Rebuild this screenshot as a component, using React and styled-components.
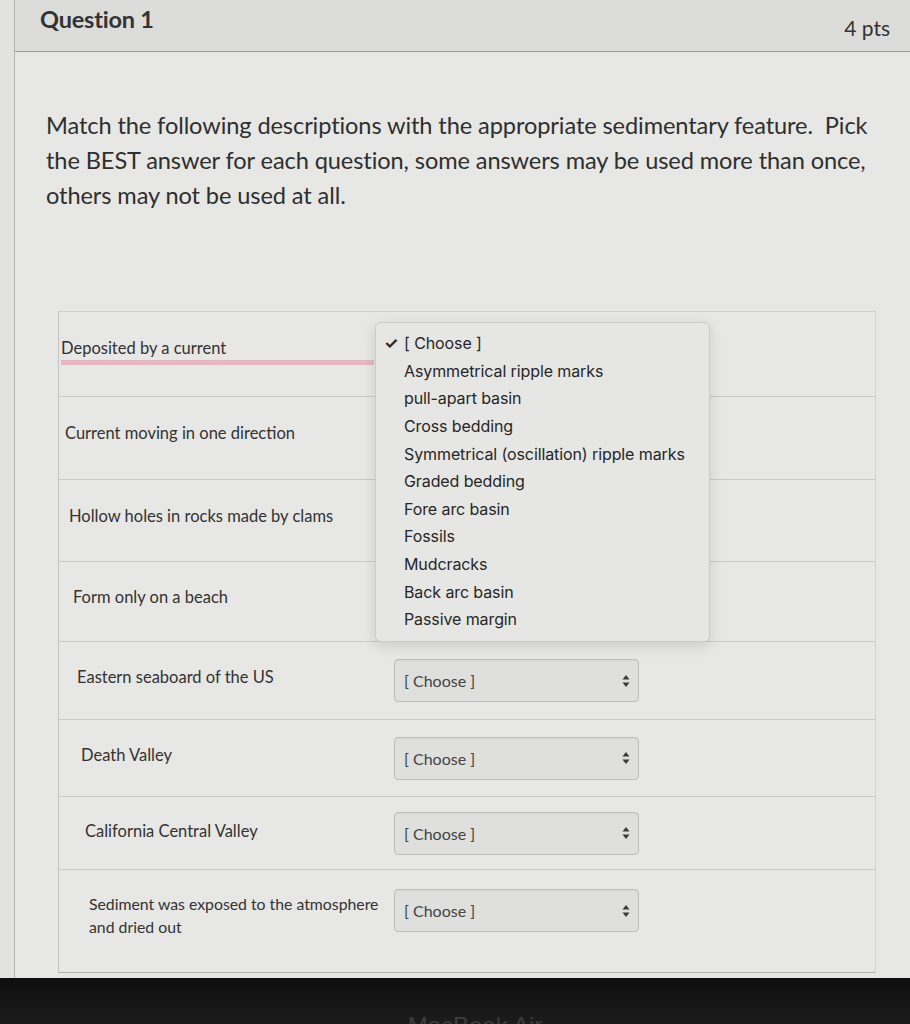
import React from "react";
import styled, { createGlobalStyle } from "styled-components";

const Global = createGlobalStyle`
  html, body { margin: 0; padding: 0; }
  body {
    background: #dcdcdb;
    font-family: Lato, "Open Sans", sans-serif;
    color: #2d2d2d;
    width: 910px;
    height: 1024px;
    overflow: hidden;
  }
`;

const Screen = styled.div`
  display: flex;
  flex-direction: column;
  height: 1024px;
`;

const Page = styled.div`
  display: flex;
  padding-left: 14px;
  background: #e2e2e1;
  height: 978px;
  box-sizing: border-box;
`;

const Card = styled.section`
  flex: 1;
  border-left: 1px solid #b4b4b4;
  background: #e7e7e5;
  display: flex;
  flex-direction: column;
`;

const Header = styled.header`
  height: 52px;
  box-sizing: border-box;
  background: #dcdcdb;
  border-bottom: 1px solid #9c9c9c;
  display: flex;
  justify-content: space-between;
  align-items: flex-start;
  padding: 5px 20px 0 25px;
`;

const Title = styled.h2`
  margin: 0;
  font-size: 23.5px;
  font-weight: 700;
  color: #333;
  letter-spacing: -0.2px;
`;

const Points = styled.span`
  font-size: 21px;
  color: #333;
  margin-top: 10px;
`;

const Body = styled.div`
  padding: 56px 34px 0 31px;
  display: flex;
  flex-direction: column;
`;

const Prompt = styled.p`
  margin: 0;
  max-width: 830px;
  font-size: 23.6px;
  line-height: 35px;
  color: #2f2f2f;
  letter-spacing: -0.1px;
`;

const Answers = styled.div`
  margin: 98px 0 0 12px;
  border-top: 1px solid #cfcfcd;
  border-bottom: 1px solid #b0b0ae;
  border-left: 1px solid #c4c4c2;
  border-right: 1px solid #d2d2d0;
  display: flex;
  flex-direction: column;
  padding-bottom: 32px;
`;

const Row = styled.div`
  display: flex;
  align-items: ${(p) => (p.$top ? "flex-start" : "center")};
  min-height: ${(p) => p.$h}px;
  box-sizing: border-box;
  border-bottom: ${(p) => (p.$last ? "none" : "1px solid #c9c9c7")};
  padding-top: ${(p) => (p.$top ? 19 : 0)}px;
`;

const Label = styled.div`
  width: 335px;
  padding-left: ${(p) => p.$indent + 2}px;
  padding-bottom: ${(p) => p.$pb}px;
  margin-top: ${(p) => p.$mt}px;
  box-sizing: border-box;
  flex-shrink: 0;
  font-size: ${(p) => p.$size}px;
  line-height: 23px;
  color: #333;
`;

const Underlined = styled.div`
  &::after {
    content: "";
    display: block;
    height: 5px;
    background: #e4b7c2;
    width: 313px;
  }
`;

const SelectWrap = styled.div`
  position: relative;
`;

const Select = styled.div`
  width: 245px;
  height: 43px;
  box-sizing: border-box;
  border: 1px solid #bdbdbb;
  border-radius: 4px;
  background: #dfdfdd;
  display: flex;
  align-items: center;
  justify-content: space-between;
  padding: 0 8px 0 9px;
  font-size: 16px;
  color: #444;
  box-shadow: inset 0 1px 2px rgba(0, 0, 0, 0.04);
  visibility: ${(p) => (p.$covered ? "hidden" : "visible")};
`;

const Arrows = () => (
  <svg width="8" height="14" viewBox="0 0 8 14">
    <path d="M4 1 L7.5 5.5 H0.5 Z" fill="#3a3a3a" />
    <path d="M4 13 L7.5 8.5 H0.5 Z" fill="#3a3a3a" />
  </svg>
);

const Menu = styled.ul`
  position: absolute;
  top: -11px;
  left: -19px;
  width: 333px;
  margin: 0;
  padding: 7px 0 8px;
  list-style: none;
  background: #e6e6e4;
  border: 1px solid #cbcbc9;
  border-radius: 6px;
  box-shadow: 0 4px 14px rgba(0, 0, 0, 0.12);
  z-index: 5;
  font-family: Inter, "Liberation Sans", sans-serif;
`;

const MenuItem = styled.li`
  display: flex;
  align-items: center;
  height: 27.6px;
  font-size: 16px;
  color: #262626;
  letter-spacing: -0.1px;
`;

const Check = styled.span`
  width: 28px;
  padding-left: 8px;
  box-sizing: border-box;
  font-size: 16px;
  font-weight: 700;
  color: #2a2a2a;
`;

const Bezel = styled.div`
  flex: 1;
  background: linear-gradient(#0e0e0e, #1c1c1c);
  display: flex;
  justify-content: center;
  align-items: flex-start;
  overflow: hidden;
`;

const Brand = styled.span`
  font-family: "Liberation Sans", sans-serif;
  font-size: 24px;
  color: #3c3c3c;
  margin-top: 34px;
  margin-left: 40px;
`;

const options = [
  "Asymmetrical ripple marks",
  "pull-apart basin",
  "Cross bedding",
  "Symmetrical (oscillation) ripple marks",
  "Graded bedding",
  "Fore arc basin",
  "Fossils",
  "Mudcracks",
  "Back arc basin",
  "Passive margin",
];

const rows = [
  { label: "Deposited by a current", h: 85, pb: 7, mt: 0 },
  { label: "Current moving in one direction", h: 83, pb: 10, mt: 0 },
  { label: "Hollow holes in rocks made by clams", h: 82, pb: 9, mt: 0 },
  { label: "Form only on a beach", h: 80, pb: 8, mt: 0 },
  { label: "Eastern seaboard of the US", h: 78, pb: 7, mt: 0 },
  { label: "Death Valley", h: 77, pb: 6, mt: 0 },
  { label: "California Central Valley", h: 73, pb: 4, mt: 0 },
  { label: "Sediment was exposed to the atmosphere and dried out", h: 70, pb: 0, mt: 3, top: true, size: 15.8 },
];

export default function App() {
  return (
    <>
      <Global />
      <Screen>
        <Page>
          <Card>
            <Header>
              <Title>Question 1</Title>
              <Points>4 pts</Points>
            </Header>
            <Body>
              <Prompt>
                Match the following descriptions with the appropriate sedimentary feature.&nbsp; Pick
                the BEST answer for each question, some answers may be used more than once,
                others may not be used at all.
              </Prompt>
              <Answers>
                {rows.map((r, i) => (
                  <Row key={r.label} $h={r.h} $last={i === rows.length - 1} $top={r.top}>
                    <Label $indent={i * 4} $pb={r.pb} $mt={r.mt} $size={r.size || 16.5}>
                      {i === 0 ? <Underlined>{r.label}</Underlined> : r.label}
                    </Label>
                    <SelectWrap>
                      <Select $covered={i < 4}>
                        <span>[ Choose ]</span>
                        <Arrows />
                      </Select>
                      {i === 0 && (
                        <Menu>
                          <MenuItem>
                            <Check>✓</Check>[ Choose ]
                          </MenuItem>
                          {options.map((o) => (
                            <MenuItem key={o}>
                              <Check />
                              {o}
                            </MenuItem>
                          ))}
                        </Menu>
                      )}
                    </SelectWrap>
                  </Row>
                ))}
              </Answers>
            </Body>
          </Card>
        </Page>
        <Bezel>
          <Brand>MacBook Air</Brand>
        </Bezel>
      </Screen>
    </>
  );
}
